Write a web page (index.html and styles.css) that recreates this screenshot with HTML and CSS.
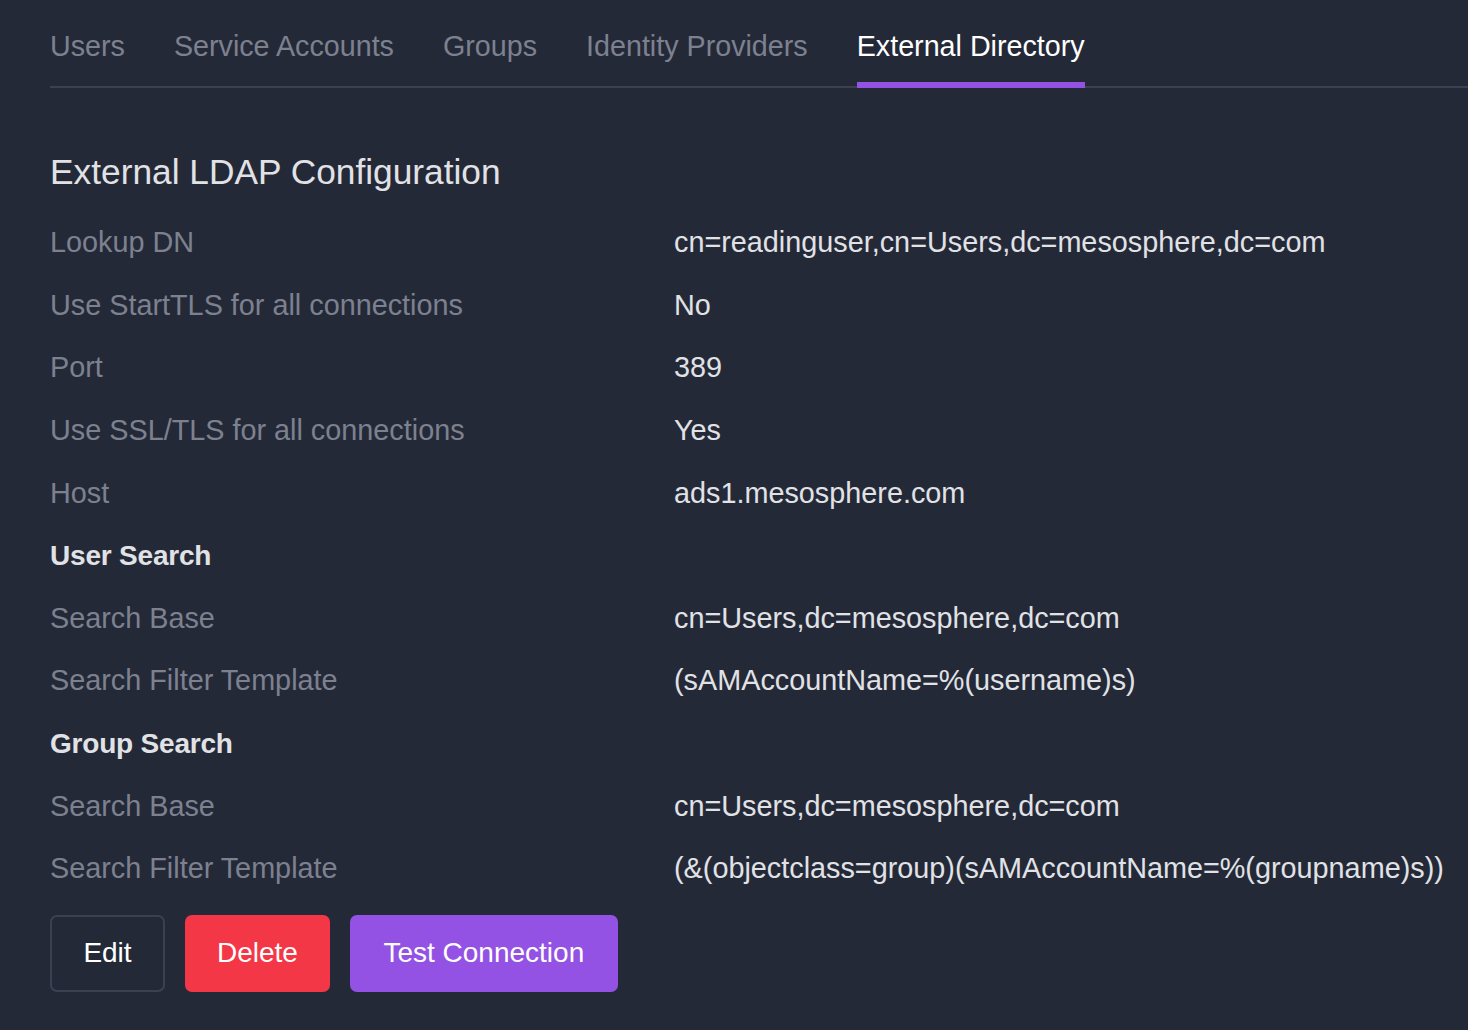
FILE: index.html
```html
<!DOCTYPE html>
<html>
<head>
<meta charset="utf-8">
<link rel="stylesheet" href="styles.css">
</head>
<body>
<div class="page">
  <nav class="tabs">
    <a class="tab">Users</a>
    <a class="tab">Service Accounts</a>
    <a class="tab">Groups</a>
    <a class="tab">Identity Providers</a>
    <a class="tab active">External Directory</a>
  </nav>
  <h1 class="title">External LDAP Configuration</h1>
  <div class="config">
    <div class="row"><div class="label">Lookup DN</div><div class="value">cn=readinguser,cn=Users,dc=mesosphere,dc=com</div></div>
    <div class="row"><div class="label">Use StartTLS for all connections</div><div class="value">No</div></div>
    <div class="row"><div class="label">Port</div><div class="value">389</div></div>
    <div class="row"><div class="label">Use SSL/TLS for all connections</div><div class="value">Yes</div></div>
    <div class="row"><div class="label">Host</div><div class="value">ads1.mesosphere.com</div></div>
    <div class="row"><div class="section">User Search</div></div>
    <div class="row"><div class="label">Search Base</div><div class="value">cn=Users,dc=mesosphere,dc=com</div></div>
    <div class="row"><div class="label">Search Filter Template</div><div class="value">(sAMAccountName=%(username)s)</div></div>
    <div class="row"><div class="section">Group Search</div></div>
    <div class="row"><div class="label">Search Base</div><div class="value">cn=Users,dc=mesosphere,dc=com</div></div>
    <div class="row"><div class="label">Search Filter Template</div><div class="value">(&amp;(objectclass=group)(sAMAccountName=%(groupname)s))</div></div>
  </div>
  <div class="actions">
    <button class="btn btn-outline">Edit</button>
    <button class="btn btn-danger">Delete</button>
    <button class="btn btn-primary">Test Connection</button>
  </div>
</div>
</body>
</html>
```
FILE: styles.css
```css
html, body {
  margin: 0;
  padding: 0;
  background: #242938;
  height: 100%;
}
body {
  font-family: "Liberation Sans", Arial, Helvetica, sans-serif;
  color: #e1e2e6;
  overflow: hidden;
}
.page {
  padding-left: 50px;
}
.tabs {
  display: flex;
  gap: 49px;
  border-bottom: 2px solid #3b4152;
}
.tab {
  font-size: 28.7px;
  line-height: 32px;
  padding: 30px 0 20px;
  margin-bottom: -2px;
  border-bottom: 6px solid transparent;
  color: #7d818f;
}
.tab.active {
  color: #ffffff;
  border-bottom-color: #9452e4;
}
.title {
  margin: 63px 0 18px;
  font-size: 35.3px;
  line-height: 42px;
  font-weight: normal;
  color: #e1e2e6;
}
.config {
  display: flex;
  flex-direction: column;
}
.row {
  display: grid;
  grid-template-columns: 624px 1fr;
  align-items: center;
  height: 62.6px;
  font-size: 28.8px;
  line-height: 32px;
}
.label {
  color: #7d818f;
}
.value {
  color: #e1e2e6;
  white-space: nowrap;
}
.section {
  font-size: 28px;
  font-weight: bold;
  color: #e1e2e6;
  letter-spacing: -0.2px;
  padding-top: 2px;
}
.actions {
  display: flex;
  gap: 20px;
  margin-top: 15px;
}
.btn {
  font-family: inherit;
  font-size: 28px;
  height: 77px;
  padding: 0 30px;
  border-radius: 7px;
  border: 2px solid transparent;
  color: #ffffff;
  cursor: pointer;
}
.btn-outline {
  background: transparent;
  border-color: #3b4152;
  min-width: 115px;
}
.btn-danger {
  background: #f43746;
}
.btn-primary {
  background: #9452e4;
  padding: 0 31.5px;
}
```
